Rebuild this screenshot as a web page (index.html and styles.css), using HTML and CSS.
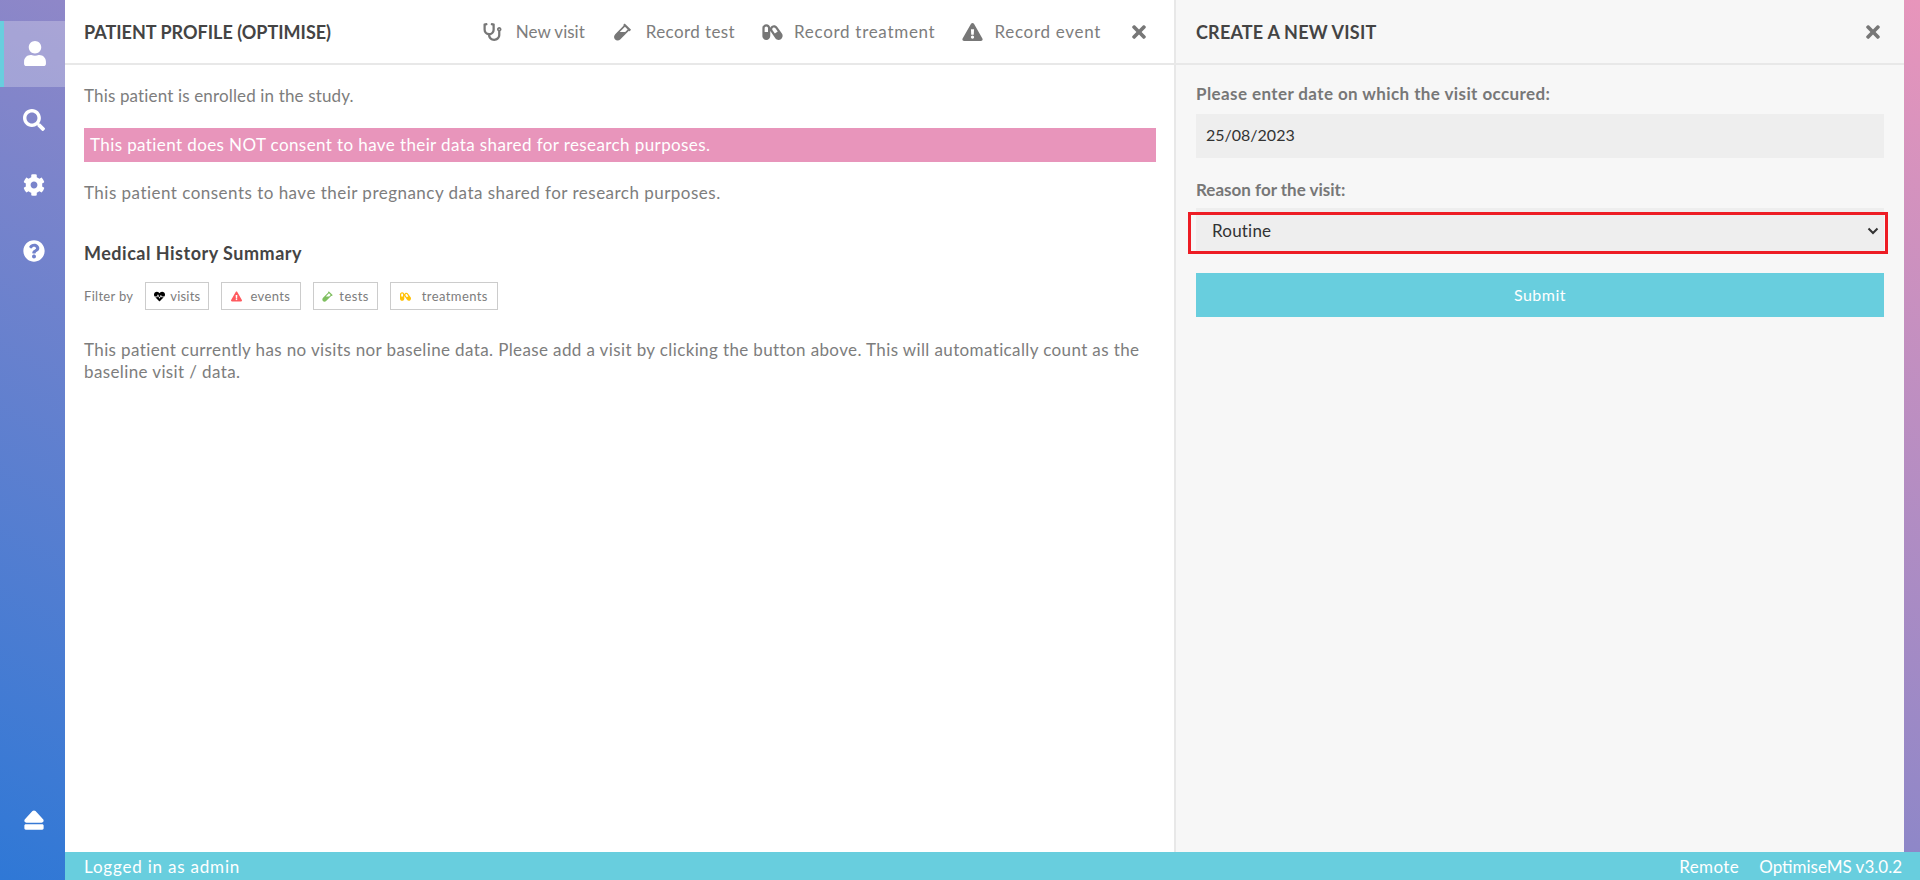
FILE: index.html
```html
<!DOCTYPE html>
<html lang="en">
<head>
    <meta charset="UTF-8">
    <title>OptimiseMS</title>
    <link rel="stylesheet" href="styles.css">
</head>
<body>
    <div class="app">
        <nav class="sidebar">
            <a class="side-item active"><svg class="side-icon user" viewBox="0 0 448 512"><path d="M224 256c70.7 0 128-57.3 128-128S294.7 0 224 0 96 57.3 96 128s57.3 128 128 128zm89.6 32h-16.7c-22.2 10.2-46.9 16-72.9 16s-50.6-5.8-72.9-16h-16.7C60.2 288 0 348.2 0 422.4V464c0 26.5 21.5 48 48 48h352c26.5 0 48-21.5 48-48v-41.6c0-74.2-60.2-134.4-134.4-134.4z"/></svg></a>
            <a class="side-item"><svg class="side-icon" viewBox="0 0 512 512"><path d="M505 442.7L405.3 343c-4.5-4.5-10.6-7-17-7H372c27.6-35.3 44-79.7 44-128C416 93.1 322.9 0 208 0S0 93.1 0 208s93.1 208 208 208c48.3 0 92.7-16.4 128-44v16.3c0 6.4 2.5 12.5 7 17l99.7 99.7c9.4 9.4 24.6 9.4 33.9 0l28.3-28.3c9.4-9.4 9.4-24.6.1-34zM208 336c-70.7 0-128-57.2-128-128 0-70.7 57.2-128 128-128 70.7 0 128 57.2 128 128 0 70.7-57.2 128-128 128z"/></svg></a>
            <a class="side-item"><svg class="side-icon" viewBox="0 0 512 512"><path d="M487.4 315.7l-42.6-24.6c4.3-23.2 4.3-47 0-70.2l42.6-24.6c4.9-2.8 7.1-8.6 5.5-14-11.1-35.6-30-67.8-54.7-94.6-3.8-4.1-10-5.1-14.8-2.3L380.8 110c-17.9-15.4-38.5-27.3-60.8-35.1V25.8c0-5.6-3.9-10.5-9.4-11.7-36.7-8.2-74.3-7.8-109.2 0-5.5 1.2-9.4 6.1-9.4 11.7V75c-22.2 7.9-42.8 19.8-60.8 35.1L88.7 85.5c-4.9-2.8-11-1.9-14.8 2.3-24.7 26.7-43.6 58.9-54.7 94.6-1.7 5.4.6 11.2 5.5 14L67.3 221c-4.3 23.2-4.3 47 0 70.2l-42.6 24.6c-4.9 2.8-7.1 8.6-5.5 14 11.1 35.6 30 67.8 54.7 94.6 3.8 4.1 10 5.1 14.8 2.3l42.6-24.6c17.9 15.4 38.5 27.3 60.8 35.1v49.2c0 5.6 3.9 10.5 9.4 11.7 36.7 8.2 74.3 7.8 109.2 0 5.5-1.2 9.4-6.1 9.4-11.7v-49.2c22.2-7.9 42.8-19.8 60.8-35.1l42.6 24.6c4.9 2.8 11 1.9 14.8-2.3 24.7-26.7 43.6-58.9 54.7-94.6 1.5-5.5-.7-11.3-5.6-14.1zM256 336c-44.1 0-80-35.9-80-80s35.9-80 80-80 80 35.9 80 80-35.9 80-80 80z"/></svg></a>
            <a class="side-item"><svg class="side-icon" viewBox="0 0 512 512"><path d="M504 256c0 136.997-111.043 248-248 248S8 392.997 8 256C8 119.083 119.043 8 256 8s248 111.083 248 248zM262.655 90c-54.497 0-89.255 22.957-116.549 63.758-3.536 5.286-2.353 12.415 2.715 16.258l34.699 26.31c5.205 3.947 12.621 3.008 16.665-2.122 17.864-22.658 30.113-35.797 57.303-35.797 20.429 0 45.698 13.148 45.698 32.958 0 14.976-12.363 22.667-32.534 33.976C247.128 238.528 216 254.941 216 296v4c0 6.627 5.373 12 12 12h56c6.627 0 12-5.373 12-12v-1.333c0-28.462 83.186-29.647 83.186-106.667 0-58.002-60.165-102-116.531-102zM256 338c-25.365 0-46 20.635-46 46 0 25.364 20.635 46 46 46s46-20.636 46-46c0-25.365-20.635-46-46-46z"/></svg></a>
            <a class="side-item logout"><svg class="side-icon" viewBox="0 0 448 512"><path d="M448 384v64c0 17.673-14.327 32-32 32H32c-17.673 0-32-14.327-32-32v-64c0-17.673 14.327-32 32-32h384c17.673 0 32 14.327 32 32zM48.053 320h351.886c41.651 0 63.581-49.674 35.383-80.435L259.383 47.558c-19.014-20.743-51.751-20.744-70.767 0L12.67 239.565C-15.475 270.268 6.324 320 48.053 320z"/></svg></a>
        </nav>

        <div class="main">
            <div class="panels">
                <section class="profile">
                    <header class="panel-head">
                        <h1 class="panel-title">PATIENT PROFILE (OPTIMISE)</h1>
                        <div class="actions">
                            <a class="action tight"><svg class="action-icon" viewBox="0 0 512 512"><path d="M447.1 112c-34.2.5-62.3 28.4-63 62.6-.5 24.3 12.5 45.6 32 56.8V344c0 57.3-50.2 104-112 104-60 0-109.2-44.1-111.9-99.2C265 333.8 320 269.2 320 192V36.6c0-11.4-8.1-21.3-19.3-23.5L237.8.5c-13-2.6-25.6 5.8-28.2 18.8L206.4 35c-2.6 13 5.8 25.6 18.8 28.2l30.7 6.1v121.4c0 52.9-42.2 96.7-95.1 97.2-53.4.5-96.9-42.7-96.9-96V69.4l30.7-6.1c13-2.6 21.4-15.2 18.8-28.2l-3.1-15.7C107.7 6.4 95.1-2 82.1.6L19.3 13C8.1 15.3 0 25.1 0 36.6V192c0 77.3 55.1 142 128.1 156.8C130.7 439.2 208.6 512 304 512c97 0 176-75.4 176-168V231.4c19.1-11.1 32-31.7 32-55.4 0-35.7-29.2-64.5-64.9-64zm.9 80c-8.8 0-16-7.2-16-16s7.2-16 16-16 16 7.2 16 16-7.2 16-16 16z"/></svg>New visit</a>
                            <a class="action"><svg class="action-icon" viewBox="0 0 480 512"><path d="M477.7 186.1L309.5 18.3c-3.1-3.1-8.2-3.1-11.3 0l-34 33.9c-3.1 3.1-3.1 8.2 0 11.3l11.2 11.1L33 316.5c-38.8 38.7-45.1 102-9.4 143.5 20.6 24 49.5 36 78.4 35.9 26.4 0 52.8-10 72.9-30.1l246.3-245.7 11.2 11.1c3.1 3.1 8.2 3.1 11.3 0l34-33.9c3.1-3 3.1-8.1 0-11.2zM318 256H161l148-147.7 78.5 78.3L318 256z"/></svg>Record test</a>
                            <a class="action wide"><svg class="action-icon" viewBox="0 0 576 512"><path d="M555.3 300.1L424.2 112.8C401.9 81 366.4 64 330.4 64c-22.6 0-45.5 6.7-65.5 20.7-19.7 13.8-33.7 32.8-41.5 53.8C220.5 79.2 172 32 112 32 50.1 32 0 82.1 0 144v224c0 61.9 50.1 112 112 112s112-50.1 112-112V218.9c3.3 8.6 7.3 17.1 12.8 25L368 431.2c22.2 31.8 57.7 48.8 93.8 48.8 22.7 0 45.5-6.7 65.5-20.7 51.7-36.2 64.2-107.5 28-159.2zM160 256H64V144c0-26.5 21.5-48 48-48s48 21.5 48 48v112zm194.8 44.9l-65.6-93.7c-7.7-11-10.7-24.4-8.3-37.6 2.3-13.2 9.7-24.8 20.7-32.5 8.5-6 18.5-9.1 28.8-9.1 16.5 0 31.9 8 41.3 21.5l65.6 93.7-82.5 57.7z"/></svg>Record treatment</a>
                            <a class="action wide last"><svg class="action-icon" viewBox="0 0 576 512"><path d="M569.517 440.013C587.975 472.007 564.806 512 527.94 512H48.054c-36.937 0-59.999-40.055-41.577-71.987L246.423 23.985c18.467-32.009 64.72-31.951 83.154 0l239.94 416.028zM288 354c-25.405 0-46 20.595-46 46s20.595 46 46 46 46-20.595 46-46-20.595-46-46-46zm-43.673-165.346l7.418 136c.347 6.364 5.609 11.346 11.982 11.346h48.546c6.373 0 11.635-4.982 11.982-11.346l7.418-136c.375-6.874-5.098-12.654-11.982-12.654h-63.383c-6.884 0-12.356 5.78-11.981 12.654z"/></svg>Record event</a>
                            <a class="close"><svg class="close-icon" viewBox="0 0 352 512"><path d="M242.72 256l100.07-100.07c12.28-12.28 12.28-32.19 0-44.48l-22.24-22.24c-12.28-12.28-32.19-12.28-44.48 0L176 189.28 75.93 89.21c-12.28-12.28-32.19-12.28-44.48 0L9.21 111.45c-12.28 12.28-12.28 32.19 0 44.48L109.28 256 9.21 356.07c-12.28 12.28-12.28 32.19 0 44.48l22.24 22.24c12.28 12.28 32.2 12.28 44.48 0L176 322.72l100.07 100.07c12.28 12.28 32.2 12.28 44.48 0l22.24-22.24c12.28-12.28 12.28-32.19 0-44.48L242.72 256z"/></svg></a>
                        </div>
                    </header>
                    <div class="profile-body">
                        <p class="note enrolled">This patient is enrolled in the study.</p>
                        <p class="note warning">This patient does NOT consent to have their data shared for research purposes.</p>
                        <p class="note pregnancy">This patient consents to have their pregnancy data shared for research purposes.</p>
                        <h2 class="section-title">Medical History Summary</h2>
                        <div class="filters">
                            <span class="filter-label">Filter by</span>
                            <span class="filter visits"><svg class="filter-icon" viewBox="0 0 512 512"><path fill="#000" d="M320.2 243.8l-49.7 99.4c-6 12.1-23.4 11.7-28.9-.6l-56.9-126.3-30 71.7H60.6l182.5 186.5c7.1 7.3 18.6 7.3 25.7 0L451.4 288H342.3l-22.1-44.2zM473.7 73.9l-2.4-2.5c-51.5-52.6-135.8-52.6-187.4 0L256 100l-27.9-28.5c-51.5-52.7-135.9-52.7-187.4 0l-2.4 2.4C-10.4 123.7-12.5 203 31 256h102.4l35.9-86.2c5.4-12.9 23.6-13.2 29.4-.4l58.2 129.3 49-97.9c5.9-11.8 22.7-11.8 28.6 0l27.6 55.2H481c43.5-53 41.4-132.3-7.3-182.1z"/></svg>visits</span>
                            <span class="filter events"><svg class="filter-icon" viewBox="0 0 576 512"><path fill="#ff5a5f" d="M569.517 440.013C587.975 472.007 564.806 512 527.94 512H48.054c-36.937 0-59.999-40.055-41.577-71.987L246.423 23.985c18.467-32.009 64.72-31.951 83.154 0l239.94 416.028zM288 354c-25.405 0-46 20.595-46 46s20.595 46 46 46 46-20.595 46-46-20.595-46-46-46zm-43.673-165.346l7.418 136c.347 6.364 5.609 11.346 11.982 11.346h48.546c6.373 0 11.635-4.982 11.982-11.346l7.418-136c.375-6.874-5.098-12.654-11.982-12.654h-63.383c-6.884 0-12.356 5.78-11.981 12.654z"/></svg>events</span>
                            <span class="filter tests"><svg class="filter-icon" viewBox="0 0 480 512"><path fill="#7fbf60" d="M477.7 186.1L309.5 18.3c-3.1-3.1-8.2-3.1-11.3 0l-34 33.9c-3.1 3.1-3.1 8.2 0 11.3l11.2 11.1L33 316.5c-38.8 38.7-45.1 102-9.4 143.5 20.6 24 49.5 36 78.4 35.9 26.4 0 52.8-10 72.9-30.1l246.3-245.7 11.2 11.1c3.1 3.1 8.2 3.1 11.3 0l34-33.9c3.1-3 3.1-8.1 0-11.2zM318 256H161l148-147.7 78.5 78.3L318 256z"/></svg>tests</span>
                            <span class="filter treatments"><svg class="filter-icon" viewBox="0 0 576 512"><path fill="#ffc107" d="M555.3 300.1L424.2 112.8C401.9 81 366.4 64 330.4 64c-22.6 0-45.5 6.7-65.5 20.7-19.7 13.8-33.7 32.8-41.5 53.8C220.5 79.2 172 32 112 32 50.1 32 0 82.1 0 144v224c0 61.9 50.1 112 112 112s112-50.1 112-112V218.9c3.3 8.6 7.3 17.1 12.8 25L368 431.2c22.2 31.8 57.7 48.8 93.8 48.8 22.7 0 45.5-6.7 65.5-20.7 51.7-36.2 64.2-107.5 28-159.2zM160 256H64V144c0-26.5 21.5-48 48-48s48 21.5 48 48v112zm194.8 44.9l-65.6-93.7c-7.7-11-10.7-24.4-8.3-37.6 2.3-13.2 9.7-24.8 20.7-32.5 8.5-6 18.5-9.1 28.8-9.1 16.5 0 31.9 8 41.3 21.5l65.6 93.7-82.5 57.7z"/></svg>treatments</span>
                        </div>
                        <p class="note summary">This patient currently has no visits nor baseline data. Please add a visit by clicking the button above. This will automatically count as the baseline visit / data.</p>
                    </div>
                </section>

                <aside class="visit">
                    <header class="panel-head">
                        <h1 class="panel-title condensed">CREATE A NEW VISIT</h1>
                        <a class="close"><svg class="close-icon" viewBox="0 0 352 512"><path d="M242.72 256l100.07-100.07c12.28-12.28 12.28-32.19 0-44.48l-22.24-22.24c-12.28-12.28-32.19-12.28-44.48 0L176 189.28 75.93 89.21c-12.28-12.28-32.19-12.28-44.48 0L9.21 111.45c-12.28 12.28-12.28 32.19 0 44.48L109.28 256 9.21 356.07c-12.28 12.28-12.28 32.19 0 44.48l22.24 22.24c12.28 12.28 32.2 12.28 44.48 0L176 322.72l100.07 100.07c12.28 12.28 32.2 12.28 44.48 0l22.24-22.24c12.28-12.28 12.28-32.19 0-44.48L242.72 256z"/></svg></a>
                    </header>
                    <form class="visit-form">
                        <label class="field-label">Please enter date on which the visit occured:</label>
                        <input class="field date" type="text" value="25/08/2023">
                        <label class="field-label second">Reason for the visit:</label>
                        <div class="select-wrap">
                            <select class="field select"><option>Routine</option></select>
                            <svg class="chevron" viewBox="0 0 12 8"><path d="M1.5 1.5L6 6l4.5-4.5"/></svg>
                            <span class="highlight"></span>
                        </div>
                        <button class="submit" type="button">Submit</button>
                    </form>
                </aside>
            </div>
            <footer class="status">
                <span class="logged">Logged in as admin</span>
                <span class="status-right"><span>Remote</span><span class="version">OptimiseMS v3.0.2</span></span>
            </footer>
        </div>
    </div>
</body>
</html>
```

FILE: styles.css
```css
*{
    margin: 0;
    padding: 0;
    box-sizing: border-box;
}
html,body{
    height: 100%;
}
body{
    overflow: hidden;
    background: linear-gradient(to top right, #2f78d6, #e895bb);
    font-family: "Lato", "Liberation Sans", sans-serif;
    font-size: 17px;
    letter-spacing: .4px;
    color: #7d7d7d;
}
.app{
    display: flex;
    height: 100%;
}

/*左侧导航*/
.sidebar{
    width: 65px;
    flex: none;
    padding-top: 21px;
    display: flex;
    flex-direction: column;
}
.side-item{
    height: 65.5px;
    flex: none;
    padding: 1px 0 0 3px;
    display: flex;
    align-items: center;
    justify-content: center;
}
.side-item.active{
    background: rgba(255,255,255,.25);
    border-left: 4px solid #68cede;
    padding: 0;
}
.side-item.logout{
    margin-top: auto;
    margin-bottom: 28px;
}
.side-icon{
    height: 22px;
    width: 22px;
    fill: #fff;
}
.side-icon.user{
    height: 25px;
}

.main{
    flex: 1;
    display: flex;
    flex-direction: column;
    min-width: 0;
}
.panels{
    flex: 1;
    display: flex;
    min-height: 0;
    padding-right: 16px;
}
.profile{
    flex: 1;
    background: #fff;
    min-width: 0;
}
.visit{
    width: 730px;
    flex: none;
    background: #f7f7f7;
    border-left: 2px solid #e8e8e8;
}

.panel-head{
    height: 65px;
    padding: 0 23px 0 20px;
    border-bottom: 2px solid #e8e8e8;
    display: flex;
    align-items: center;
    justify-content: space-between;
}
.profile .panel-head{
    padding: 0 27px 0 19px;
}
.panel-title{
    font-size: 18px;
    font-weight: 700;
    color: #444;
    letter-spacing: 0;
}
.panel-title.condensed{
    letter-spacing: .2px;
}
.actions{
    display: flex;
    align-items: center;
}
.action{
    display: flex;
    align-items: center;
    margin-right: 27px;
    color: #7d7d7d;
    letter-spacing: .4px;
}
.action.tight{
    letter-spacing: 0;
}
.action.wide{
    letter-spacing: .7px;
}
.action.last{
    margin-right: 30px;
}
.action-icon{
    height: 18px;
    width: 21px;
    margin-right: 13px;
    fill: #777;
}
.action.wide .action-icon{
    margin-right: 11px;
}
.close{
    display: flex;
}
.close-icon{
    height: 20px;
    width: 16px;
    fill: #777;
}

.profile-body{
    padding: 0 18px 0 19px;
}
.note{
    line-height: 22px;
}
.enrolled{
    margin-top: 20px;
    letter-spacing: .15px;
}
.pregnancy{
    letter-spacing: .48px;
}
.warning{
    margin-top: 21px;
    margin-bottom: 20px;
    padding: 6px;
    background: #e895bb;
    color: #fff;
}
.section-title{
    margin-top: 38px;
    font-size: 18px;
    line-height: 22px;
    font-weight: 700;
    color: #444;
    letter-spacing: .5px;
}
.filters{
    margin-top: 18px;
    display: flex;
    align-items: center;
}
.filter-label{
    font-size: 13px;
    letter-spacing: .3px;
    margin-right: 12px;
}
.filter{
    height: 28px;
    padding: 0 9px;
    margin-right: 12px;
    border: 1px solid #ccc;
    font-size: 13px;
    display: flex;
    align-items: center;
}
.filter-icon{
    height: 11px;
    width: 11px;
    margin-right: 6px;
}
.filter.visits{
    padding: 0 8px;
    letter-spacing: .2px;
}
.filter.visits .filter-icon{
    margin-right: 5px;
}
.filter.events{
    padding-right: 10px;
}
.filter.events .filter-icon{
    margin-right: 8px;
}
.filter.tests{
    padding: 0 8px;
}
.filter.treatments .filter-icon{
    margin-right: 11px;
}
.summary{
    margin-top: 29px;
    letter-spacing: .38px;
}

.visit-form{
    padding: 18px 20px 0 20px;
}
.field-label{
    display: block;
    font-weight: 700;
    color: #777;
    line-height: 22px;
}
.field-label.second{
    margin-top: 21px;
    letter-spacing: 0;
}
.field{
    display: block;
    width: 100%;
    height: 44px;
    margin-top: 9px;
    padding: 0 10px;
    border: 0;
    outline: 0;
    background: #eee;
    color: #333;
    font-family: inherit;
    font-size: 16px;
    letter-spacing: 0;
}
.date{
    padding-bottom: 3px;
}
.select{
    appearance: none;
    margin-top: 7px;
    padding-left: 16px;
    font-size: 17px;
    letter-spacing: .2px;
}
.select-wrap{
    position: relative;
}
.chevron{
    position: absolute;
    right: 5px;
    top: 19px;
    width: 12px;
    height: 8px;
    fill: none;
    stroke: #333;
    stroke-width: 2;
}
/*红色标注框*/
.highlight{
    position: absolute;
    left: -8px;
    right: -4px;
    top: 4px;
    bottom: -2px;
    border: 3px solid #ed1c24;
}
.submit{
    display: block;
    width: 100%;
    height: 44px;
    margin-top: 21px;
    padding-bottom: 2px;
    border: 0;
    background: #68cede;
    color: #fff;
    font-family: inherit;
    font-size: 16px;
    letter-spacing: .5px;
}

.status{
    height: 28px;
    flex: none;
    padding: 0 18px 0 19px;
    background: #68cede;
    color: #fff;
    display: flex;
    align-items: center;
    justify-content: space-between;
}
.logged{
    letter-spacing: .8px;
}
.status-right{
    display: flex;
    gap: 20px;
}
.version{
    letter-spacing: 0;
}
```
